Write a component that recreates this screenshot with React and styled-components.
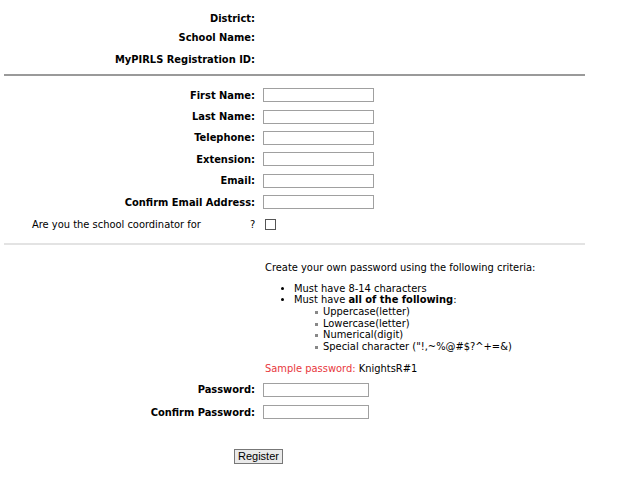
import React from "react";
import styled, { createGlobalStyle } from "styled-components";

const Global = createGlobalStyle`
  html, body { margin: 0; padding: 0; background: #fff; }
  body { font-family: "DejaVu Sans Condensed", "DejaVu Sans", Verdana, sans-serif; font-size: 11px; color: #000; }
`;

const Page = styled.div`
  width: 629px;
  padding: 0 0 0 4px;
  box-sizing: border-box;
`;

const Grid = styled.div`
  display: grid;
  grid-template-columns: 251px auto;
  column-gap: 8px;
  align-items: center;
  padding-top: ${(p) => p.$top || 0}px;
  grid-auto-rows: ${(p) => p.$row}px;
`;

const Label = styled.div`
  font-weight: bold;
  text-align: right;
  white-space: nowrap;
  line-height: 13px;
  margin-top: ${(p) => p.$shift || 0}px;
`;

const TextInput = styled.input`
  box-sizing: border-box;
  width: ${(p) => p.$w}px;
  height: 14px;
  margin: 0;
  padding: 0;
  border: 1px solid #a0a0a0;
  background: #fff;
`;

const Rule = styled.div`
  width: 581px;
  height: 2px;
  background: ${(p) => p.$color};
  margin-top: ${(p) => p.$mt}px;
`;

const CheckRow = styled.div`
  display: flex;
  align-items: center;
  height: 22px;
  margin-top: 1px;
  padding-left: 28px;
`;

const CheckText = styled.span`
  width: 218px;
`;

const Q = styled.span`
  width: 15px;
`;

const Box = styled.span`
  width: 9px;
  height: 9px;
  border: 1px solid #555;
  background: #fff;
`;

const Criteria = styled.div`
  margin-left: 261px;
  margin-top: 17px;
  line-height: 11.7px;
`;

const Intro = styled.div`
  margin-bottom: 9px;
`;

const List = styled.ul`
  margin: 0;
  padding-left: 29px;
  list-style: disc;
  li::marker { font-size: 10px; }
`;

const SubList = styled.ul`
  margin: 0;
  padding-left: 29px;
  list-style: none;
  li { position: relative; }
  li::before {
    content: "";
    position: absolute;
    left: -8px;
    top: 5px;
    width: 3px;
    height: 3px;
    background: #888;
  }
`;

const Sample = styled.div`
  margin-top: 10px;
  span { color: #e8383d; }
`;

const ButtonRow = styled.div`
  padding: 26px 0 0 230px;
`;

const Button = styled.button`
  font-family: "Liberation Sans", Arial, sans-serif;
  font-size: 11px;
  height: 15px;
  padding: 0 3px;
  line-height: 11px;
  background: #eaeaea;
  border: 1px solid #777;
  color: #000;
`;

export default function App() {
  const fields = ["First Name:", "Last Name:", "Telephone:", "Extension:", "Email:", "Confirm Email Address:"];
  return (
    <Page>
      <Global />
      <Grid $top={9.5} $row={18.5}>
        <Label>District:</Label><div />
        <Label>School Name:</Label><div />
        <Label $shift={7}>MyPIRLS Registration ID:</Label><div />
      </Grid>
      <Rule $color="#9a9a9a" $mt={9} />
      <Grid $top={8.5} $row={21.4}>
        {fields.map((f) => (
          <React.Fragment key={f}>
            <Label>{f}</Label>
            <TextInput $w={111} />
          </React.Fragment>
        ))}
      </Grid>
      <CheckRow>
        <CheckText>Are you the school coordinator for</CheckText>
        <Q>?</Q>
        <Box />
      </CheckRow>
      <Rule $color="#e3e3e3" $mt={7} />
      <Criteria>
        <Intro>Create your own password using the following criteria:</Intro>
        <List>
          <li>Must have 8-14 characters</li>
          <li>
            Must have <b>all of the following</b>:
            <SubList>
              <li>Uppercase(letter)</li>
              <li>Lowercase(letter)</li>
              <li>Numerical(digit)</li>
              <li>Special character ("!,~%@#$?^+=&amp;)</li>
            </SubList>
          </li>
        </List>
        <Sample><span>Sample password:</span> KnightsR#1</Sample>
      </Criteria>
      <Grid $top={4} $row={22.5}>
        <Label>Password:</Label>
        <TextInput $w={106} />
        <Label>Confirm Password:</Label>
        <TextInput $w={106} />
      </Grid>
      <ButtonRow>
        <Button>Register</Button>
      </ButtonRow>
    </Page>
  );
}
